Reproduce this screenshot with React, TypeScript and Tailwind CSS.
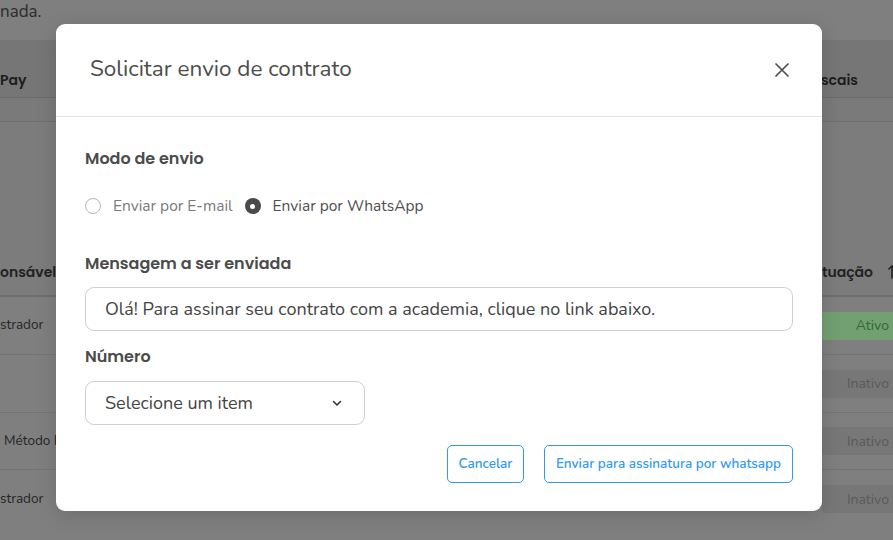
import React, { useState } from 'react';

const BodyFont = "font-['Nunito','Lato','Noto_Sans',sans-serif]";
const HeadFont = "font-['Poppins','Open_Sans','Noto_Sans',sans-serif]";

const Radio: React.FC<{ checked: boolean; label: string; onClick: () => void }> = ({ checked, label, onClick }) => (
    <button type="button" onClick={onClick} className="flex items-center gap-[12px]">
        {checked ? (
            <span className="flex h-[16px] w-[16px] items-center justify-center rounded-full bg-[#4a4a4a]">
                <span className="h-[5px] w-[5px] rounded-full bg-white" />
            </span>
        ) : (
            <span className="h-[16px] w-[16px] rounded-full border border-[#b5b5b5] bg-white" />
        )}
        <span className={`text-[15.5px] ${checked ? 'text-[#4f4f4f]' : 'text-[#7a7a7a]'}`}>{label}</span>
    </button>
);

const BadgeCell: React.FC<{ active?: boolean }> = ({ active }) => (
    <div
        className={`flex h-[28px] w-[71px] items-center justify-end pr-[4px] text-[14px] ${
            active ? 'bg-[#72a072] text-[#2f6a2f]' : 'bg-[#777777] text-[#5a5a5a]'
        }`}
    >
        {active ? 'Ativo' : 'Inativo'}
    </div>
);

export default function App() {
    const [mode, setMode] = useState<'email' | 'whatsapp'>('whatsapp');

    return (
        <div className={`relative h-[540px] w-full overflow-hidden bg-[#7f7f7f] ${BodyFont}`}>
            {/* background page, dimmed */}
            <div className="flex flex-col">
                <div className="h-[40px] text-[17px] leading-[24px] text-[#2b2b2b]">nada.</div>
                <div className={`flex h-[58px] items-end justify-between border-b border-[#6b6b6b] bg-[#767676] pb-[6px] pr-[35px] text-[14px] font-semibold text-[#1c1c1c] ${HeadFont}`}>
                    <span>Pay</span>
                    <span>Fiscais</span>
                </div>
                <div className="h-[24px] border-b border-[#6f6f6f] bg-[#7a7a7a]" />
                <div className="h-[127px] bg-[#7c7c7c]" />
                <div className={`flex h-[48px] items-center justify-between border-b-2 border-[#6e6e6e] bg-[#7c7c7c] text-[14px] font-semibold text-[#222] ${HeadFont}`}>
                    <span>onsável</span>
                    <span className="-mr-[3px] flex items-center gap-[15px]">
                        <span>Situação</span>
                        <svg width="8" height="14" viewBox="0 0 8 14" fill="none" stroke="#222" strokeWidth="1.6" strokeLinecap="round">
                            <path d="M4 1V13M1 4L4 1L7 4" />
                        </svg>
                    </span>
                </div>
                <div className="flex h-[58px] items-center justify-between border-b border-[#747474] text-[13.5px] text-[#262626]">
                    <span>strador</span>
                    <BadgeCell active />
                </div>
                <div className="flex h-[58px] items-center justify-end border-b border-[#747474] text-[13.5px] text-[#262626]">
                    <BadgeCell />
                </div>
                <div className="flex h-[57px] items-center justify-between border-b border-[#747474] text-[13.5px] text-[#262626]">
                    <span className="pl-[4px]">Método Pix</span>
                    <BadgeCell />
                </div>
                <div className="flex h-[58px] items-center justify-between text-[13.5px] text-[#262626]">
                    <span>strador</span>
                    <BadgeCell />
                </div>
            </div>

            {/* modal */}
            <div className="absolute left-[56px] top-[24px] flex w-[766px] flex-col rounded-[9px] bg-white shadow-[0_4px_20px_rgba(0,0,0,0.15)]">
                <div className="flex h-[93px] items-center justify-between border-b border-[#e2e2e2] pl-[34px] pr-[32px]">
                    <h2 className="pb-[2px] text-[22.5px] text-[#4d4d4d]">Solicitar envio de contrato</h2>
                    <button type="button" className="text-[#4d4d4d]">
                        <svg width="16" height="16" viewBox="0 0 16 16" fill="none" stroke="currentColor" strokeWidth="1.7" strokeLinecap="round">
                            <path d="M2 2L14 14M14 2L2 14" />
                        </svg>
                    </button>
                </div>

                <div className="flex flex-col px-[29px] pb-[28px] pt-[30px]">
                    <label className={`text-[16px] font-semibold leading-[24px] text-[#4b4b4b] ${HeadFont}`}>Modo de envio</label>
                    <div className="mt-[23px] flex h-[24px] items-center gap-[12px]">
                        <Radio checked={mode === 'email'} label="Enviar por E-mail" onClick={() => setMode('email')} />
                        <Radio checked={mode === 'whatsapp'} label="Enviar por WhatsApp" onClick={() => setMode('whatsapp')} />
                    </div>

                    <label className={`mt-[34px] text-[16px] font-semibold leading-[24px] text-[#4b4b4b] ${HeadFont}`}>Mensagem a ser enviada</label>
                    <input
                        type="text"
                        defaultValue="Olá! Para assinar seu contrato com a academia, clique no link abaixo."
                        className="mt-[11px] h-[44px] w-full rounded-[9px] border border-[#cfcfcf] px-[19px] text-[18px] text-[#444] outline-none"
                    />

                    <label className={`mt-[14px] text-[16px] font-semibold leading-[24px] text-[#4b4b4b] ${HeadFont}`}>Número</label>
                    <button
                        type="button"
                        className="mt-[12px] flex h-[44px] w-[280px] items-center justify-between rounded-[9px] border border-[#cfcfcf] pl-[19px] pr-[21px] text-[18px] text-[#444]"
                    >
                        <span>Selecione um item</span>
                        <svg width="12" height="12" viewBox="0 0 12 12" fill="none" stroke="#333" strokeWidth="1.6" strokeLinecap="round" strokeLinejoin="round">
                            <path d="M2.5 4.5L6 8L9.5 4.5" />
                        </svg>
                    </button>

                    <div className="mt-[20px] flex justify-end gap-[20px]">
                        <button type="button" className="h-[38px] w-[77px] rounded-[5px] border border-[#2f9bf0] text-[13.5px] font-semibold text-[#2f9bf0]">
                            Cancelar
                        </button>
                        <button type="button" className="h-[38px] w-[249px] rounded-[5px] border border-[#2f9bf0] text-[13.5px] font-semibold text-[#2f9bf0]">
                            Enviar para assinatura por whatsapp
                        </button>
                    </div>
                </div>
            </div>
        </div>
    );
}
